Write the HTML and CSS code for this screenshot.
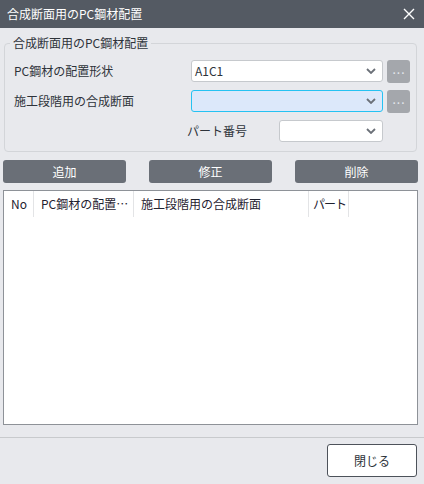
FILE: index.html
```html
<!DOCTYPE html>
<html lang="ja">
<head>
<meta charset="utf-8">
<link rel="stylesheet" href="styles.css">
</head>
<body>
<div class="dialog">
  <div class="titlebar">
    <span class="title">合成断面用のPC鋼材配置</span>
    <svg class="close" width="12" height="12" viewBox="0 0 12 12"><path d="M1 1L11 11M11 1L1 11" stroke="#fff" stroke-width="1.4" fill="none"/></svg>
  </div>
  <div class="content">
    <fieldset class="group">
      <legend>合成断面用のPC鋼材配置</legend>
      <div class="row">
        <span class="label">PC鋼材の配置形状</span>
        <div class="select"><span class="value">A1C1</span><svg class="chev" width="10" height="6" viewBox="0 0 10 6"><path d="M1 1L5 5L9 1" stroke="#6b7078" stroke-width="1.8" fill="none"/></svg></div>
        <div class="more">...</div>
      </div>
      <div class="row">
        <span class="label">施工段階用の合成断面</span>
        <div class="select focus"><span class="value"></span><svg class="chev" width="10" height="6" viewBox="0 0 10 6"><path d="M1 1L5 5L9 1" stroke="#6b7078" stroke-width="1.8" fill="none"/></svg></div>
        <div class="more">...</div>
      </div>
      <div class="row row3">
        <span class="label small">パート番号</span>
        <div class="select short"><span class="value"></span><svg class="chev" width="10" height="6" viewBox="0 0 10 6"><path d="M1 1L5 5L9 1" stroke="#6b7078" stroke-width="1.8" fill="none"/></svg></div>
        <div class="spacer"></div>
      </div>
    </fieldset>
    <div class="actions">
      <div class="btn">追加</div>
      <div class="btn">修正</div>
      <div class="btn">削除</div>
    </div>
    <div class="table">
      <div class="thead">
        <div class="th c1">No</div>
        <div class="th c2">PC鋼材の配置形状</div>
        <div class="th c3">施工段階用の合成断面</div>
        <div class="th c4">パート</div>
      </div>
    </div>
  </div>
  <div class="footer">
    <div class="closebtn">閉じる</div>
  </div>
</div>
</body>
</html>
```
FILE: styles.css
```css
* { box-sizing: border-box; }
html, body { margin: 0; padding: 0; }
body {
  width: 424px;
  height: 484px;
  background: #e8e9ed;
  font-family: "Noto Sans CJK JP", "Noto Sans", sans-serif;
  font-size: 12px;
  color: #2e333a;
  overflow: hidden;
}
.dialog { display: flex; flex-direction: column; height: 484px; }
.titlebar {
  height: 28px;
  background: #545a63;
  display: flex;
  align-items: center;
  justify-content: space-between;
  padding: 0 9px 0 7px;
  color: #fff;
}
.title { font-size: 12px; line-height: 16px; }
.content { padding: 7px 7px 0 3px; flex: 1; display: flex; flex-direction: column; }
.group {
  margin: 0 0 0 1px;
  border: 1px solid #d3d5d9;
  border-radius: 4px;
  padding: 9px 6px 9px 9px;
  display: flex;
  flex-direction: column;
  gap: 8px;
}
.group legend {
  padding: 0 3px;
  margin-left: -4px;
  line-height: 16px;
  color: #2e333a;
}
.row { display: flex; align-items: center; height: 22px; }
.label { flex: 1; line-height: 16px; }
.select {
  width: 192px;
  height: 22px;
  background: #fff;
  border: 1px solid #c6c9cd;
  border-radius: 3px;
  display: flex;
  align-items: center;
  justify-content: space-between;
  padding: 0 6px 0 3px;
}
.select .value { line-height: 16px; color: #2e333a; }
.select.focus { background: #dce8fa; border-color: #25c2f2; }
.select.short { width: 104px; }
.chev { display: block; }
.more {
  width: 23px;
  height: 23px;
  margin-left: 4px;
  background: #a4a7ac;
  border-radius: 3px;
  color: #e4e8ee;
  font-size: 12px;
  line-height: 18px;
  text-align: center;
  letter-spacing: 1px;
  padding-left: 1px;
}
.row3 .label.small { flex: 0 0 92px; margin-left: auto; }
.row3 .spacer { width: 27px; }
.actions {
  display: flex;
  justify-content: space-between;
  margin-top: 8px;
  margin-right: -1px;
}
.btn {
  width: 123px;
  height: 23px;
  background: #6a6f77;
  border-radius: 3px;
  color: #fff;
  text-align: center;
  line-height: 23px;
}
.table {
  margin-top: 7px;
  margin-right: -1px;
  height: 235px;
  background: #fff;
  border: 1px solid #8e9298;
}
.thead { display: flex; height: 26px; align-items: stretch; }
.th {
  padding-left: 7px;
  line-height: 26px;
  border-right: 1px solid #e3e4e6;
  white-space: nowrap;
  overflow: hidden;
  text-overflow: ellipsis;
  color: #1f2230;
}
.c1 { width: 30px; }
.c2 { width: 100px; }
.c3 { width: 175px; }
.c4 { width: 40px; padding-left: 4px; letter-spacing: -1px; }
.footer {
  border-top: 1px solid #c8cacd;
  height: 47px;
  display: flex;
  justify-content: flex-end;
  align-items: flex-start;
  padding: 6px 7px 0 0;
}
.closebtn {
  width: 90px;
  height: 33px;
  background: #fff;
  border: 1px solid #4d525a;
  border-radius: 3px;
  text-align: center;
  line-height: 31px;
  color: #2e333a;
}
```
